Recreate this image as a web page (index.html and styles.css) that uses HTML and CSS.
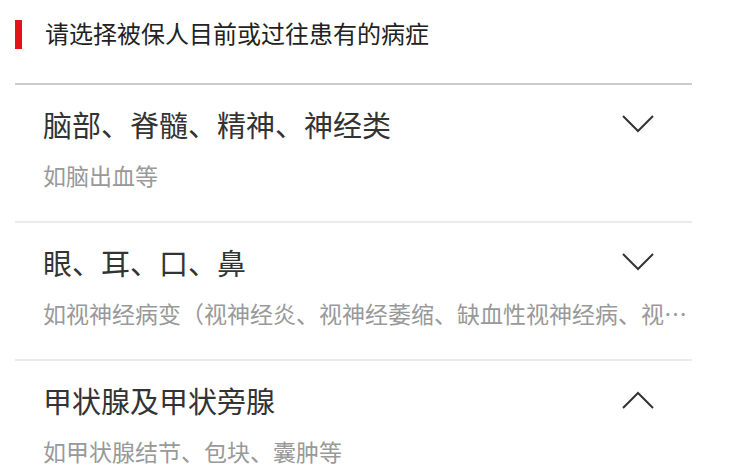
FILE: index.html
```html
<!DOCTYPE html>
<html lang="zh-CN">
<head>
  <meta charset="UTF-8" />
  <title>病症选择</title>
  <link rel="stylesheet" href="styles.css">
</head>
<body>
  <div class="page">
    <div class="head">
      <span class="mark"></span>
      <h1>请选择被保人目前或过往患有的病症</h1>
    </div>

    <div class="item">
      <div class="item-top">
        <h2>脑部、脊髓、精神、神经类</h2>
        <svg class="arrow" width="32" height="18" viewBox="0 0 32 18"><polyline points="1,1 16,16 31,1" fill="none" stroke="#333" stroke-width="2"/></svg>
      </div>
      <p>如脑出血等</p>
    </div>

    <div class="item">
      <div class="item-top">
        <h2>眼、耳、口、鼻</h2>
        <svg class="arrow" width="32" height="18" viewBox="0 0 32 18"><polyline points="1,1 16,16 31,1" fill="none" stroke="#333" stroke-width="2"/></svg>
      </div>
      <p>如视神经病变（视神经炎、视神经萎缩、缺血性视神经病、视神经乳头水肿等）</p>
    </div>

    <div class="item">
      <div class="item-top">
        <h2>甲状腺及甲状旁腺</h2>
        <svg class="arrow" width="32" height="18" viewBox="0 0 32 18"><polyline points="1,17 16,2 31,17" fill="none" stroke="#333" stroke-width="2"/></svg>
      </div>
      <p>如甲状腺结节、包块、囊肿等</p>
    </div>
  </div>
</body>
</html>
```

FILE: styles.css
```css
body {
  margin: 0;
  background: #fff;
  font-family: "Noto Sans CJK SC", "Noto Sans", sans-serif;
  color: #333;
}
.page {
  width: 677px;
  margin-left: 15px;
}
.head {
  display: flex;
  align-items: center;
  height: 66px;
  padding-bottom: 17px;
  border-bottom: 2px solid #ccc;
}
.mark {
  width: 7px;
  height: 29px;
  margin-top: 2px;
  background: #e3131b;
}
.head h1 {
  margin: 0 0 0 23px;
  font-size: 24px;
  line-height: 36px;
  font-weight: normal;
  color: #222;
}
.item {
  padding: 18px 0 29px 28px;
  border-bottom: 2px solid #ebebeb;
}
.item:last-child {
  border-bottom: none;
}
.item-top {
  display: flex;
  align-items: center;
  justify-content: space-between;
  height: 42px;
}
.item h2 {
  margin: 0;
  font-size: 29px;
  line-height: 42px;
  font-weight: normal;
  color: #333;
}
.arrow {
  margin-right: 38px;
}
.item p {
  margin: 13px 0 0;
  font-size: 23px;
  line-height: 34px;
  color: #999;
  white-space: nowrap;
  overflow: hidden;
  text-overflow: ellipsis;
}
```
